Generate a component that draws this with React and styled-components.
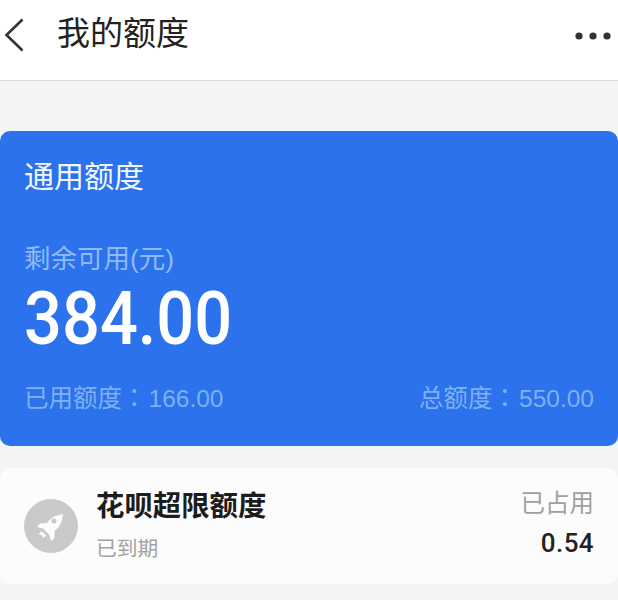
import React from "react";
import styled, { createGlobalStyle } from "styled-components";

const GlobalStyle = createGlobalStyle`
  html, body {
    margin: 0;
    padding: 0;
    background: #f4f4f4;
  }
  body {
    font-family: "Liberation Sans", "Noto Sans CJK SC", sans-serif;
  }
`;

const Page = styled.div`
  width: 618px;
  height: 600px;
  overflow: hidden;
  background: #f4f4f4;
`;

const Header = styled.header`
  height: 80px;
  display: flex;
  align-items: center;
  padding: 0 7px 0 4px;
  background: #fff;
  border-bottom: 1px solid #dcdcdc;
`;

const Title = styled.h1`
  margin: 0 0 0 33px;
  font-size: 33px;
  font-weight: 400;
  color: #222;
  line-height: 1;
  flex: 1;
  position: relative;
  top: -7px;
`;

const BackIcon = styled.svg`
  display: block;
  width: 20px;
  height: 34px;
  position: relative;
  top: -5px;
`;

const MoreIcon = styled.svg`
  display: block;
  width: 36px;
  height: 10px;
  position: relative;
  top: -4px;
`;

const QuotaCard = styled.section`
  margin-top: 50px;
  height: 315px;
  box-sizing: border-box;
  padding: 28px 24px 0 24px;
  background: #2b72ec;
  border-radius: 10px;
  display: flex;
  flex-direction: column;
`;

const CardTitle = styled.div`
  font-size: 30px;
  line-height: 36px;
  color: #f2f7ff;
`;

const RemainLabel = styled.div`
  margin-top: 49px;
  font-size: 26.5px;
  line-height: 30px;
  color: #8fbaf6;
`;

const Amount = styled.div`
  margin-top: 2px;
  font-family: "Roboto", sans-serif;
  font-size: 75px;
  font-weight: 500;
  line-height: 84px;
  color: #fff;
  transform: scaleX(0.89);
  transform-origin: left center;
`;

const Totals = styled.div`
  margin-top: 22px;
  display: flex;
  justify-content: space-between;
  font-size: 24.5px;
  line-height: 30px;
  color: #7fb0f3;
`;

// TC glyph sits centred in its cell, as in the reference
const Colon = styled.span`
  font-family: "Noto Sans CJK TC", sans-serif;
  letter-spacing: 2px;
`;

const OverCard = styled.section`
  margin-top: 22px;
  height: 116px;
  box-sizing: border-box;
  padding: 0 24px;
  background: #fcfcfc;
  border-radius: 10px;
  display: flex;
  align-items: center;
`;

const Badge = styled.div`
  width: 54px;
  height: 54px;
  border-radius: 50%;
  background: #c9c9c9;
  display: flex;
  align-items: center;
  justify-content: center;
  flex-shrink: 0;
`;

const OverText = styled.div`
  margin-left: 18px;
  padding-bottom: 3px;
  flex: 1;
`;

const OverTitle = styled.div`
  font-size: 28.4px;
  font-weight: 700;
  line-height: 36px;
  color: #1c1c1c;
`;

const OverStatus = styled.div`
  margin-top: 12px;
  font-size: 20.8px;
  line-height: 26px;
  color: #a3a3a3;
`;

const OverRight = styled.div`
  text-align: right;
  padding-bottom: 6px;
`;

const UsedLabel = styled.div`
  font-size: 24.5px;
  line-height: 30px;
  color: #a0a0a0;
`;

const UsedValue = styled.div`
  margin-top: 9px;
  font-family: "Roboto", sans-serif;
  font-size: 26px;
  font-weight: 500;
  line-height: 30px;
  letter-spacing: 0.4px;
  color: #222;
`;

export default function App() {
  return (
    <Page>
      <GlobalStyle />
      <Header>
        <BackIcon viewBox="0 0 20 34" fill="none">
          <path d="M18.500 1.500 L2.500 17 L18.500 32.500" stroke="#333" strokeWidth="2.6" />
        </BackIcon>
        <Title>我的额度</Title>
        <MoreIcon viewBox="0 0 36 10" fill="#333">
          <circle cx="4" cy="5" r="3.6" />
          <circle cx="18" cy="5" r="3.6" />
          <circle cx="32" cy="5" r="3.6" />
        </MoreIcon>
      </Header>

      <QuotaCard>
        <CardTitle>通用额度</CardTitle>
        <RemainLabel>剩余可用(元)</RemainLabel>
        <Amount>384.00</Amount>
        <Totals>
          <span>已用额度<Colon>：</Colon>166.00</span>
          <span>总额度<Colon>：</Colon>550.00</span>
        </Totals>
      </QuotaCard>

      <OverCard>
        <Badge>
          <svg width="36" height="36" viewBox="0 0 36 36" fill="#fcfcfc">
            <path d="M30 6 C23 7 17 10 14 15 L7 15.500 L4 19 L10 20.500 L16.500 27 L18 33 L21.500 30 L21.500 23 C27 19 29.500 13 30 6 Z M21 10.500 A2.500 2.500 0 1 1 21 15.500 A2.500 2.500 0 1 1 21 10.500 Z" fillRule="evenodd" />
            <path d="M8.500 23 L13 27.500 L10 30 L9 27 L5.500 26.500 Z" />
          </svg>
        </Badge>
        <OverText>
          <OverTitle>花呗超限额度</OverTitle>
          <OverStatus>已到期</OverStatus>
        </OverText>
        <OverRight>
          <UsedLabel>已占用</UsedLabel>
          <UsedValue>0.54</UsedValue>
        </OverRight>
      </OverCard>
    </Page>
  );
}
